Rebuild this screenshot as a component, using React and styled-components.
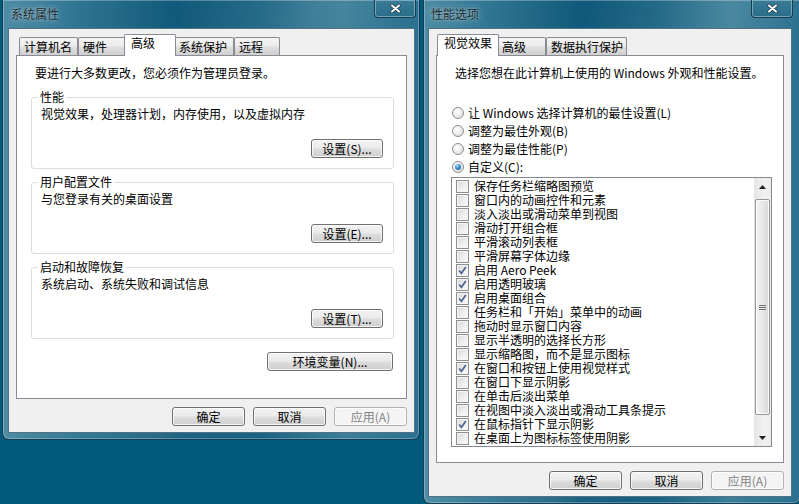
import React from "react";
import styled, { createGlobalStyle } from "styled-components";

const GlobalStyle = createGlobalStyle`
  *, *::before, *::after { box-sizing: border-box; }
  html, body { margin: 0; padding: 0; }
  body {
    background: #03597a;
    font-family: "Noto Sans CJK SC", "Noto Sans", sans-serif;
    font-size: 12px;
    color: #000;
    overflow: hidden;
  }
`;

const Desktop = styled.div`
  display: flex;
  align-items: flex-start;
  gap: 3px;
  width: 799px;
  height: 504px;
  padding-left: 2px;
  overflow: hidden;
`;

const Frame = styled.div`
  flex-shrink: 0;
  width: ${(p) => p.$w}px;
  height: ${(p) => p.$h}px;
  display: flex;
  flex-direction: column;
  padding: 0 ${(p) => p.$pr}px 6px ${(p) => p.$pl}px;
  border: 1px solid #123f55;
  border-top: none;
  border-radius: 0 0 7px 7px;
  background:
    linear-gradient(110deg, rgba(255,255,255,0) 30%, rgba(255,255,255,0.08) 55%, rgba(255,255,255,0) 70%),
    linear-gradient(90deg, #4f8ca5 0%, #2f7592 18%, #11597a 42%, #1b6383 62%, #3c7e98 82%, #2b7090 100%);
  box-shadow: inset 0 0 0 1px rgba(255, 255, 255, 0.28);
`;

const TitleBar = styled.div`
  height: 28px;
  flex-shrink: 0;
  display: flex;
  justify-content: space-between;
  align-items: flex-start;
  padding-left: 3px;
`;

const Title = styled.span`
  margin-top: 7px;
  line-height: 14px;
  color: #1c2a30;
  text-shadow: 0 0 6px rgba(255, 255, 255, 0.55), 0 0 2px rgba(255, 255, 255, 0.4);
`;

const CloseButton = styled.div`
  width: 42px;
  height: 18px;
  margin-right: -1px;
  display: flex;
  align-items: center;
  justify-content: center;
  border: 1px solid #173f52;
  border-top: none;
  border-radius: 0 0 4px 4px;
  background: linear-gradient(#3a7c97, #2a6d8a);
  box-shadow: inset 0 0 0 1px rgba(200, 230, 240, 0.45);
`;

const Client = styled.div`
  flex: 1;
  min-height: 0;
  display: flex;
  flex-direction: column;
  background: #f0f0f0;
  border: 1px solid #4f7486;
  padding: 5px 7px 6px 7px;
`;

const TabStrip = styled.div`
  display: flex;
  align-items: flex-end;
  height: 22px;
  padding-left: 3px;
  margin-bottom: -1px;
  position: relative;
  z-index: 1;
`;

const Tab = styled.div`
  width: ${(p) => (p.$active ? p.$w + 4 : p.$w)}px;
  height: ${(p) => (p.$active ? 22 : 18)}px;
  margin: ${(p) => (p.$active ? "0 -2px" : "0 0 1px 0")};
  position: relative;
  z-index: ${(p) => (p.$active ? 2 : 1)};
  border: 1px solid #898c95;
  border-bottom: none;
  border-radius: 2px 2px 0 0;
  padding: ${(p) => (p.$active ? "1px 0 0 6px" : "2px 0 0 4px")};
  line-height: 14px;
  white-space: nowrap;
  background: ${(p) =>
    p.$active ? "#fff" : "linear-gradient(#f4f4f4 0%, #ececec 45%, #dedede 55%, #d0d0d0 100%)"};
`;

const Panel = styled.div`
  flex: 1;
  min-height: 0;
  display: flex;
  flex-direction: column;
  background: #fff;
  border: 1px solid #898c95;
  padding: 10px 12px 0 14px;
`;

const Intro = styled.p`
  margin: 0 0 0 4px;
  line-height: 14px;
  white-space: nowrap;
`;

const Group = styled.fieldset`
  margin: ${(p) => p.$top}px 0 0 0;
  min-inline-size: 0;
  padding: 3px 10px 10px 9px;
  border: 1px solid #d5dfe5;
  border-radius: 3px;
`;

const Legend = styled.legend`
  margin-left: -3px;
  padding: 0 2px;
  line-height: 14px;
`;

const GroupText = styled.div`
  line-height: 14px;
  white-space: nowrap;
`;

const ButtonRow = styled.div`
  display: flex;
  justify-content: flex-end;
  margin-top: ${(p) => p.$top || 0}px;
  margin-right: ${(p) => p.$right || 0}px;
`;

const Button = styled.div`
  width: ${(p) => p.$w}px;
  height: 19px;
  display: flex;
  align-items: center;
  justify-content: center;
  line-height: 14px;
  white-space: nowrap;
  border: 1px solid ${(p) => (p.$disabled ? "#adb2b5" : "#707070")};
  border-radius: 3px;
  color: ${(p) => (p.$disabled ? "#838383" : "#000")};
  background: ${(p) =>
    p.$disabled
      ? "#f4f4f4"
      : "linear-gradient(#f2f2f2 0%, #ebebeb 48%, #dddddd 52%, #cfcfcf 100%)"};
  box-shadow: inset 0 0 0 1px rgba(255, 255, 255, 0.75);
`;

const DialogButtons = styled.div`
  display: flex;
  justify-content: flex-end;
  gap: 8px;
  margin-top: 8px;
`;

const RadioList = styled.div`
  display: flex;
  flex-direction: column;
  margin-top: 24px;
`;

const RadioRow = styled.div`
  display: flex;
  align-items: center;
  gap: 4px;
  height: 18px;
  padding-left: 1px;
  line-height: 14px;
  white-space: nowrap;
`;

const RadioCircle = styled.span`
  width: 12px;
  height: 12px;
  border-radius: 50%;
  border: 1px solid #8e8f8f;
  background: radial-gradient(circle at 40% 35%, #ffffff 0%, #f0f0f0 40%, #d6d6d6 100%);
  display: flex;
  align-items: center;
  justify-content: center;
  flex-shrink: 0;
`;

const RadioDot = styled.span`
  width: 6px;
  height: 6px;
  border-radius: 50%;
  background: radial-gradient(circle at 35% 30%, #a6e0ff 0%, #3d8fd0 45%, #14508f 100%);
`;

const ListBox = styled.div`
  display: flex;
  margin: 1px -1px 0 0;
  border: 1px solid #828790;
  background: #fff;
`;

const Items = styled.div`
  flex: 1;
  padding: 1px 0 1px 4px;
`;

const Item = styled.div`
  display: flex;
  align-items: center;
  gap: 5px;
  height: 14px;
  line-height: 14px;
  white-space: nowrap;
`;

const CheckBox = styled.span`
  width: 13px;
  height: 13px;
  flex-shrink: 0;
  border: 1px solid #8e8f8f;
  background: linear-gradient(135deg, #d8d8d8 0%, #ececec 50%, #fbfbfb 100%);
  box-shadow: inset 0 0 0 1px #f4f4f4;
  display: flex;
  align-items: center;
  justify-content: center;
`;

const ScrollBar = styled.div`
  width: 17px;
  display: flex;
  flex-direction: column;
  background: linear-gradient(90deg, #e3e3e3, #f2f2f2 60%, #ececec);
`;

const ScrollArrow = styled.div`
  height: 17px;
  display: flex;
  align-items: center;
  justify-content: center;
`;

const Thumb = styled.div`
  height: 216px;
  margin: 4px 1px 0 1px;
  border: 1px solid #979797;
  border-radius: 2px;
  background: linear-gradient(90deg, #f3f3f3 0%, #e8e8e8 50%, #d8d8d8 100%);
  box-shadow: inset 0 0 0 1px rgba(255, 255, 255, 0.8);
  display: flex;
  align-items: center;
  justify-content: center;
`;

const Spacer = styled.div`
  flex: 1;
`;

function CloseGlyph() {
  return (
    <svg width="11" height="9" viewBox="0 0 11 9">
      <path d="M2 1.5 L9 7.5 M9 1.5 L2 7.5" stroke="#1a3a48" strokeWidth="3.4" strokeLinecap="round" />
      <path d="M2 1.5 L9 7.5 M9 1.5 L2 7.5" stroke="#fff" strokeWidth="2" strokeLinecap="round" />
    </svg>
  );
}

function CheckMark() {
  return (
    <svg width="9" height="9" viewBox="0 0 9 9">
      <path d="M1.2 4.6 L3.4 7.3 L7.8 1" stroke="#4c5f92" strokeWidth="1.6" fill="none" />
    </svg>
  );
}

function Window({ w, h, pl, pr, title, children }) {
  return (
    <Frame $w={w} $h={h} $pl={pl} $pr={pr}>
      <TitleBar>
        <Title>{title}</Title>
        <CloseButton>
          <CloseGlyph />
        </CloseButton>
      </TitleBar>
      <Client>{children}</Client>
    </Frame>
  );
}

function Tabs({ tabs }) {
  return (
    <TabStrip>
      {tabs.map((t) => (
        <Tab key={t.label} $w={t.w} $active={t.active}>
          {t.label}
        </Tab>
      ))}
    </TabStrip>
  );
}

function Footer() {
  return (
    <DialogButtons>
      <Button $w={73}>确定</Button>
      <Button $w={73}>取消</Button>
      <Button $w={73} $disabled>应用(A)</Button>
    </DialogButtons>
  );
}

const leftTabs = [
  { label: "计算机名", w: 59 },
  { label: "硬件", w: 48 },
  { label: "高级", w: 48, active: true },
  { label: "系统保护", w: 60 },
  { label: "远程", w: 46 },
];

const rightTabs = [
  { label: "视觉效果", w: 58, active: true },
  { label: "高级", w: 49 },
  { label: "数据执行保护", w: 81 },
];

const groups = [
  { title: "性能", text: "视觉效果，处理器计划，内存使用，以及虚拟内存", btn: "设置(S)...", top: 10 },
  { title: "用户配置文件", text: "与您登录有关的桌面设置", btn: "设置(E)...", top: 6 },
  { title: "启动和故障恢复", text: "系统启动、系统失败和调试信息", btn: "设置(T)...", top: 6 },
];

const radios = [
  { label: "让 Windows 选择计算机的最佳设置(L)" },
  { label: "调整为最佳外观(B)" },
  { label: "调整为最佳性能(P)" },
  { label: "自定义(C):", on: true },
];

const effects = [
  ["保存任务栏缩略图预览", false],
  ["窗口内的动画控件和元素", false],
  ["淡入淡出或滑动菜单到视图", false],
  ["滑动打开组合框", false],
  ["平滑滚动列表框", false],
  ["平滑屏幕字体边缘", false],
  ["启用 Aero Peek", true],
  ["启用透明玻璃", true],
  ["启用桌面组合", true],
  ["任务栏和「开始」菜单中的动画", false],
  ["拖动时显示窗口内容", false],
  ["显示半透明的选择长方形", false],
  ["显示缩略图，而不是显示图标", false],
  ["在窗口和按钮上使用视觉样式", true],
  ["在窗口下显示阴影", false],
  ["在单击后淡出菜单", false],
  ["在视图中淡入淡出或滑动工具条提示", false],
  ["在鼠标指针下显示阴影", true],
  ["在桌面上为图标标签使用阴影", false],
];

export default function App() {
  return (
    <>
      <GlobalStyle />
      <Desktop>
        <Window w={418} h={440} pl={5} pr={4} title="系统属性">
          <Tabs tabs={leftTabs} />
          <Panel>
            <Intro>要进行大多数更改，您必须作为管理员登录。</Intro>
            {groups.map((g) => (
              <Group key={g.title} $top={g.top}>
                <Legend>{g.title}</Legend>
                <GroupText>{g.text}</GroupText>
                <ButtonRow $top={18}>
                  <Button $w={72}>{g.btn}</Button>
                </ButtonRow>
              </Group>
            ))}
            <ButtonRow $top={13} $right={1}>
              <Button $w={126}>环境变量(N)...</Button>
            </ButtonRow>
          </Panel>
          <Footer />
        </Window>

        <Window w={378} h={504} pl={4} pr={8} title="性能选项">
          <Tabs tabs={rightTabs} />
          <Panel>
            <Intro>选择您想在此计算机上使用的 Windows 外观和性能设置。</Intro>
            <RadioList>
              {radios.map((r) => (
                <RadioRow key={r.label}>
                  <RadioCircle>{r.on && <RadioDot />}</RadioCircle>
                  {r.label}
                </RadioRow>
              ))}
            </RadioList>
            <ListBox>
              <Items>
                {effects.map(([label, on]) => (
                  <Item key={label}>
                    <CheckBox>{on && <CheckMark />}</CheckBox>
                    {label}
                  </Item>
                ))}
              </Items>
              <ScrollBar>
                <ScrollArrow>
                  <svg width="7" height="4" viewBox="0 0 7 4">
                    <path d="M0 4 L3.5 0 L7 4 Z" fill="#222" />
                  </svg>
                </ScrollArrow>
                <Thumb>
                  <svg width="7" height="7" viewBox="0 0 7 7">
                    <path d="M0 1.5 H7 M0 3.5 H7 M0 5.5 H7" stroke="#6f6f6f" strokeWidth="1" />
                  </svg>
                </Thumb>
                <Spacer />
                <ScrollArrow>
                  <svg width="7" height="4" viewBox="0 0 7 4">
                    <path d="M0 0 L7 0 L3.5 4 Z" fill="#222" />
                  </svg>
                </ScrollArrow>
              </ScrollBar>
            </ListBox>
          </Panel>
          <Footer />
        </Window>
      </Desktop>
    </>
  );
}
